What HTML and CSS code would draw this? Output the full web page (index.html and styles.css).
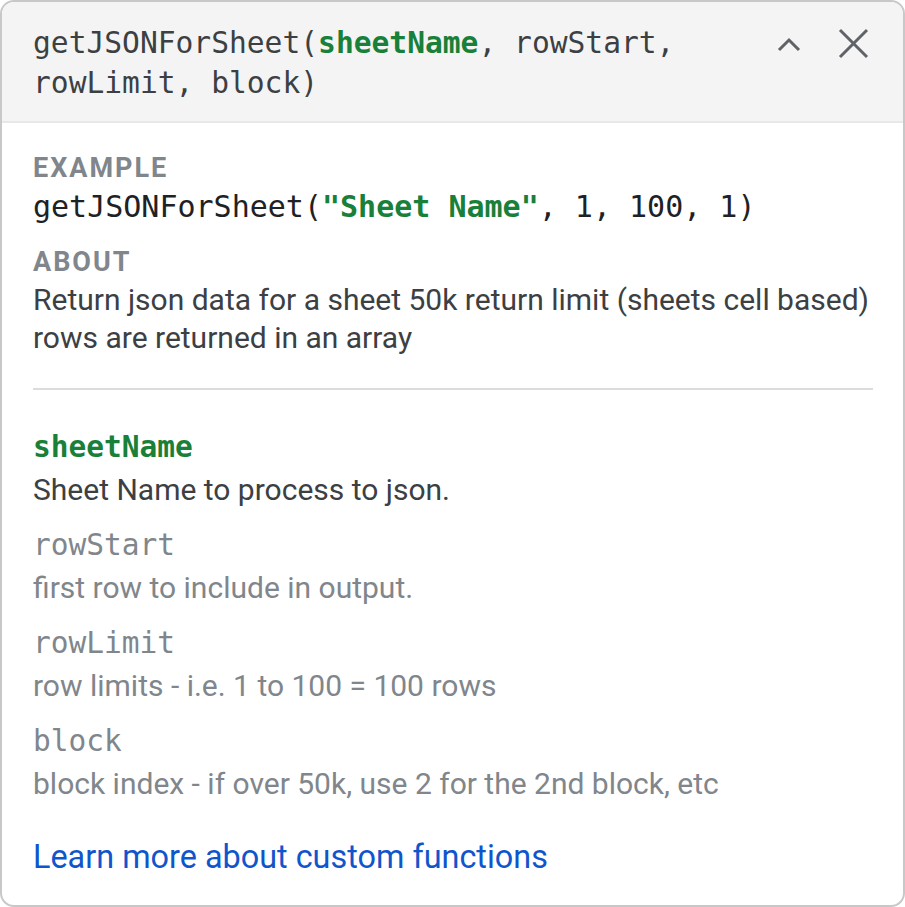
FILE: index.html
```html
<!DOCTYPE html>
<html>
<head>
<meta charset="utf-8">
<link rel="stylesheet" href="styles.css">
</head>
<body>
<div class="card">
  <div class="head">
    <div class="sig">getJSONForSheet(<b class="arg">sheetName</b>, rowStart, rowLimit, block)</div>
    <div class="actions">
      <svg class="chev" width="26" height="18" viewBox="0 0 26 18"><path d="M3 15 L13 5 L23 15" fill="none" stroke="#5f6368" stroke-width="3"/></svg>
      <svg class="close" width="31" height="31" viewBox="0 0 31 31"><path d="M2 2 L29 29 M29 2 L2 29" fill="none" stroke="#5f6368" stroke-width="3"/></svg>
    </div>
  </div>
  <div class="body">
    <div class="label">EXAMPLE</div>
    <div class="code">getJSONForSheet(<b class="arg">"Sheet Name"</b>, 1, 100, 1)</div>
    <div class="label label2">ABOUT</div>
    <div class="text">Return json data for a sheet 50k return limit (sheets cell based) rows are returned in an array</div>
    <div class="divider"></div>
    <div class="param">
      <div class="pname active">sheetName</div>
      <div class="pdesc active">Sheet Name to process to json.</div>
    </div>
    <div class="param">
      <div class="pname">rowStart</div>
      <div class="pdesc">first row to include in output.</div>
    </div>
    <div class="param">
      <div class="pname">rowLimit</div>
      <div class="pdesc">row limits - i.e. 1 to 100 = 100 rows</div>
    </div>
    <div class="param">
      <div class="pname">block</div>
      <div class="pdesc">block index - if over 50k, use 2 for the 2nd block, etc</div>
    </div>
    <a class="link" href="#">Learn more about custom functions</a>
  </div>
</div>
</body>
</html>
```
FILE: styles.css
```css
html, body {
  margin: 0;
  padding: 0;
  background: #ffffff;
}
.card {
  box-sizing: border-box;
  width: 905px;
  height: 907px;
  border: 2px solid #c8c8c8;
  border-radius: 14px;
  overflow: hidden;
  background: #ffffff;
  font-family: Roboto, "Liberation Sans", sans-serif;
}
.head {
  background: #f4f4f4;
  border-bottom: 2px solid #e8e8e8;
  height: 121px;
  box-sizing: border-box;
  padding: 21px 34px 0 31px;
  display: flex;
  justify-content: space-between;
  align-items: flex-start;
}
.sig {
  font-family: "DejaVu Sans Mono", monospace;
  font-size: 29.6px;
  line-height: 40px;
  color: #3c4043;
  width: 680px;
}
.arg {
  color: #188038;
  font-weight: bold;
}
.actions {
  display: flex;
  align-items: center;
  gap: 36px;
  padding-top: 5px;
}
.body {
  padding: 26px 31px 0 31px;
}
.label {
  font-size: 27px;
  font-weight: 700;
  color: #80868b;
  letter-spacing: 2px;
  line-height: 38px;
}
.label2 {
  margin-top: 16px;
}
.code {
  font-family: "DejaVu Sans Mono", monospace;
  font-size: 30px;
  line-height: 40px;
  color: #202124;
}
.text {
  font-size: 30px;
  line-height: 38px;
  color: #3c4043;
  width: 850px;
}
.divider {
  height: 2px;
  background: #dadce0;
  margin: 31px 0 35px 0;
  width: 840px;
}
.param {
  margin-bottom: 12px;
}
.pname {
  font-family: "DejaVu Sans Mono", monospace;
  font-size: 29.5px;
  line-height: 44px;
  color: #80868b;
}
.pname.active {
  color: #188038;
  font-weight: bold;
}
.pdesc {
  font-size: 30px;
  line-height: 42px;
  color: #80868b;
}
.pdesc.active {
  color: #3c4043;
}
.link {
  display: block;
  margin-top: 32px;
  font-size: 32.4px;
  line-height: 40px;
  color: #1155cc;
  text-decoration: none;
}
```
